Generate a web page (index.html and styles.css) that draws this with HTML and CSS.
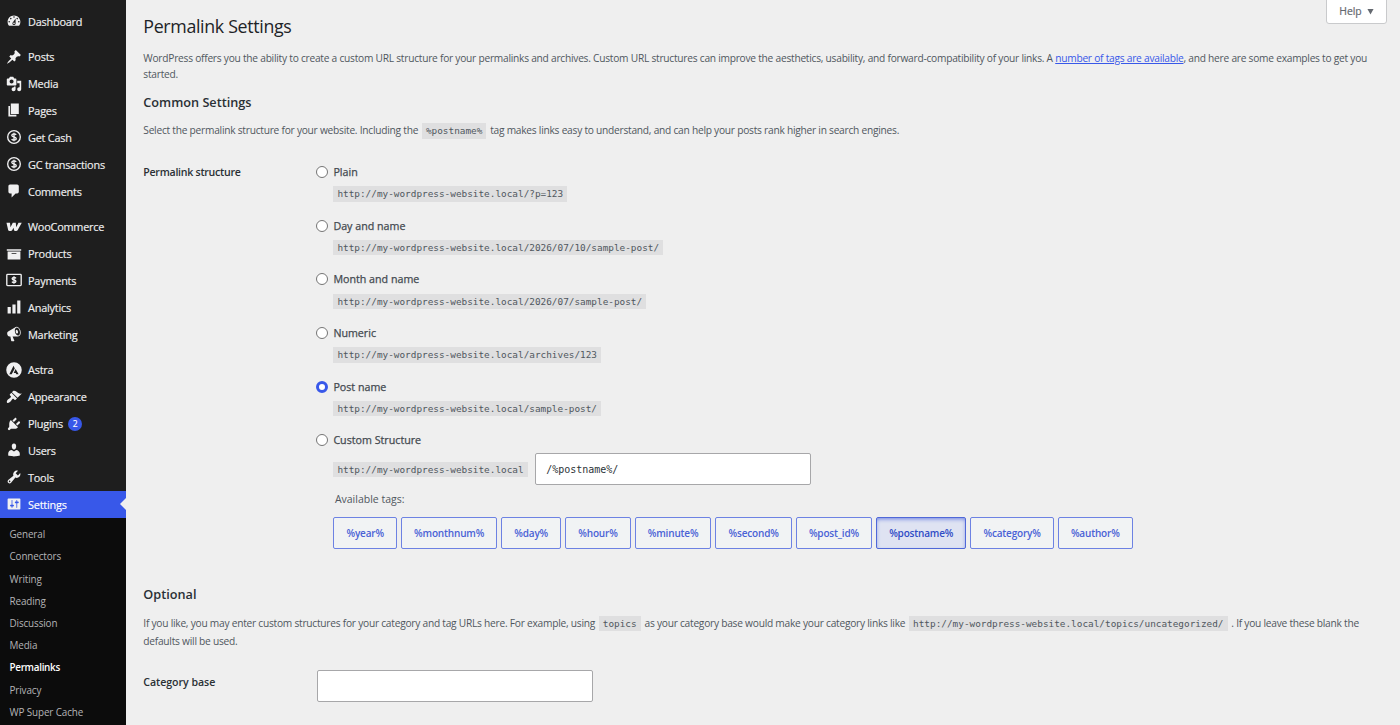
FILE: index.html
```html
<!DOCTYPE html>
<html lang="en">
<head>
<meta charset="utf-8">
<title>Permalink Settings</title>
<link rel="stylesheet" href="styles.css">
</head>
<body>
<div class="admin">
<nav class="sidebar">
  <ul class="menu">
    <li class="item"><svg class="icon" viewBox="0 0 20 20"><path d="M3.76 16h12.48c1.1-1.37 1.76-3.11 1.76-5 0-4.42-3.58-8-8-8s-8 3.58-8 8c0 1.89.66 3.63 1.76 5zM10 4c.55 0 1 .45 1 1s-.45 1-1 1-1-.45-1-1 .45-1 1-1zM6 6c.55 0 1 .45 1 1s-.45 1-1 1-1-.45-1-1 .45-1 1-1zm8 0c.55 0 1 .45 1 1s-.45 1-1 1-1-.45-1-1 .45-1 1-1zm-5.37 5.55L12 7v6c0 1.1-.9 2-2 2s-2-.9-2-2c0-.57.24-1.08.63-1.45zM4 10c.55 0 1 .45 1 1s-.45 1-1 1-1-.45-1-1 .45-1 1-1zm12 0c.55 0 1 .45 1 1s-.45 1-1 1-1-.45-1-1 .45-1 1-1zm-5 3c0-.55-.45-1-1-1s-1 .45-1 1 .45 1 1 1 1-.45 1-1z" fill-rule="evenodd"/></svg><span>Dashboard</span></li>
    <li class="sep"></li>
    <li class="item"><svg class="icon" viewBox="0 0 20 20"><path d="M10.44 3.02l1.82-1.82 6.36 6.35-1.83 1.82c-1.05-.68-2.48-.57-3.41.36l-.75.75c-.92.93-1.04 2.35-.35 3.41l-1.83 1.82-2.41-2.41-2.8 2.79c-.42.42-3.38 2.71-3.8 2.29s1.86-3.39 2.28-3.81l2.79-2.79L4.1 9.36l1.83-1.82c1.05.69 2.48.57 3.4-.36l.75-.75c.93-.92 1.05-2.35.36-3.41z"/></svg><span>Posts</span></li>
    <li class="item"><svg class="icon" viewBox="0 0 20 20"><path d="M13 11V4c0-.55-.45-1-1-1h-1.67L9 1H5L3.67 3H2c-.55 0-1 .45-1 1v7c0 .55.45 1 1 1h10c.55 0 1-.45 1-1zM7 4.5c1.38 0 2.5 1.12 2.5 2.5S8.38 9.5 7 9.5 4.5 8.38 4.5 7 5.62 4.5 7 4.5zM14 6h5v10.5c0 1.38-1.12 2.5-2.5 2.5S14 17.88 14 16.5s1.12-2.5 2.5-2.5c.17 0 .34.02.5.05V9h-3V6zm-4 8.05V13h2v3.5c0 1.38-1.12 2.5-2.5 2.5S7 17.88 7 16.5 8.12 14 9.5 14c.17 0 .34.02.5.05z" fill-rule="evenodd"/></svg><span>Media</span></li>
    <li class="item"><svg class="icon" viewBox="0 0 20 20"><path d="M6 15V2h10v13H6zm-1 1h8v2H3V5h2v11z"/></svg><span>Pages</span></li>
    <li class="item"><svg class="icon line" viewBox="0 0 20 20"><circle cx="10" cy="10" r="7.9"/><path d="M12.7 7.3C12.2 6.5 11.2 6.1 10 6.1c-1.6 0-2.7.7-2.7 1.9 0 2.7 5.5 1.3 5.5 4 0 1.200-1.200 1.900-2.800 1.900-1.400 0-2.500-.5-2.900-1.400M10 4.600v10.800"/></svg><span>Get Cash</span></li>
    <li class="item"><svg class="icon line" viewBox="0 0 20 20"><circle cx="10" cy="10" r="7.9"/><path d="M12.7 7.3C12.2 6.5 11.2 6.1 10 6.1c-1.6 0-2.7.7-2.7 1.9 0 2.7 5.5 1.3 5.5 4 0 1.200-1.200 1.900-2.800 1.900-1.400 0-2.500-.5-2.900-1.400M10 4.600v10.800"/></svg><span>GC transactions</span></li>
    <li class="item"><svg class="icon" viewBox="0 0 20 20"><path d="M5 2h9c1.1 0 2 .9 2 2v7c0 1.1-.9 2-2 2h-2l-5 5v-5H5c-1.1 0-2-.9-2-2V4c0-1.100.9-2 2-2z"/></svg><span>Comments</span></li>
    <li class="sep"></li>
    <li class="item"><svg class="icon" viewBox="0 0 20 20"><path d="M.6 4.700H5L5.600 10.200L8.500 4.700H12.200L12.800 10.200L15.600 4.700H19.700L14.500 14Q13.900 15 12.700 15H11.400Q10.200 15 10 13.800L9.500 10.900L7.700 14Q7.100 15 6 15H4.400Q3 15 2.700 13.700z"/></svg><span>WooCommerce</span></li>
    <li class="item"><svg class="icon" viewBox="0 0 20 20"><path d="M19 4v2H1V4h18zM2 7h16v10H2V7zm11 3V9H7v1h6z" fill-rule="evenodd"/></svg><span>Products</span></li>
    <li class="item"><svg class="icon line" viewBox="0 0 20 20"><rect x="1" y="3" width="18" height="14" rx="1"/><path d="M12.500 7.900C12 7.200 11.100 6.900 10 6.900c-1.400 0-2.300.5-2.300 1.500 0 2.100 4.700 1.100 4.700 3.200 0 1-1 1.500-2.400 1.500-1.200 0-2.100-.4-2.500-1.100M10 5.400v9.200"/></svg><span>Payments</span></li>
    <li class="item"><svg class="icon" viewBox="0 0 20 20"><path d="M18 18V2h-4v16h4zm-6 0V7H8v11h4zm-6 0v-8H2v8h4z"/></svg><span>Analytics</span></li>
    <li class="item"><svg class="icon" viewBox="0 0 20 20"><path fill-rule="evenodd" d="M18.150 5.940c.46 1.620.38 3.220-.02 4.480-.42 1.280-1.260 2.180-2.300 2.480-.16.060-.26.060-.4.060-.06.020-.12.020-.18.020-.06.020-.14.020-.22.020h-6.800l2.220 5.500c.02.140-.06.260-.14.340-.08.100-.24.160-.34.160H6.950c-.1 0-.26-.06-.34-.16-.08-.08-.16-.2-.14-.34l-1-5.500H4.250l-.02-.02c-.5.060-1.080-.18-1.540-.62s-.88-1.080-1.060-1.880c-.24-.8-.2-1.560-.02-2.200.18-.62.58-1.080 1.060-1.300l.02-.02 9-5.400c.1-.06.18-.1.24-.16.060-.04.140-.08.240-.12.160-.08.280-.12.500-.18 1.040-.3 2.240.1 3.220.98s1.840 2.240 2.260 3.860zm-2.580 5.980h-.02c.4-.1.740-.34 1.040-.7.580-.7.860-1.760.860-3.040 0-.64-.1-1.300-.28-1.980-.34-1.360-1.020-2.500-1.780-3.240s-1.680-1.100-2.460-.88c-.82.220-1.400.960-1.700 2-.32 1.040-.28 2.360.060 3.720.38 1.360 1 2.500 1.800 3.240.78.740 1.620 1.100 2.480.88zm-2.540-7.080c.22-.04.42-.02.62.04.38.16.76.48 1.020 1s.42 1.200.42 1.780c0 .3-.04.56-.12.8-.18.48-.44.84-.86.94-.34.1-.8-.06-1.140-.4s-.64-.86-.78-1.500c-.18-.62-.12-1.240.02-1.720s.48-.84.82-.94z"/></svg><span>Marketing</span></li>
    <li class="sep"></li>
    <li class="item"><svg class="icon" viewBox="0 0 20 20"><path fill-rule="evenodd" d="M10 .3a9.700 9.700 0 1 0 0 19.400A9.700 9.700 0 0 0 10 .3zM9.400 4.800L11 8 7.100 15.400H4.200zM12 8.800L15.800 15.400H12.900L12.100 13.600H9.600z"/></svg><span>Astra</span></li>
    <li class="item"><svg class="icon" viewBox="0 0 20 20"><path d="M14.480 11.060L7.410 3.990l1.500-1.500c.5-.56 2.300-.47 3.510.32 1.210.8 1.430 1.280 2.910 2.100 1.180.64 2.450 1.260 4.450.85zm-.71.71L6.700 4.700 4.930 6.470c-.39.39-.39 1.020 0 1.410l1.060 1.060c.39.39.39 1.030 0 1.420-.6.6-1.430 1.110-2.210 1.690-.35.26-.7.53-1.010.84C1.430 14.230.4 16.080 1.400 17.070c.99 1 2.840-.03 4.180-1.360.31-.31.58-.66.85-1.020.57-.78 1.080-1.610 1.690-2.210.39-.39 1.020-.39 1.410 0l1.060 1.060c.39.39 1.020.39 1.410 0z"/></svg><span>Appearance</span></li>
    <li class="item"><svg class="icon" viewBox="0 0 20 20"><path d="M13.110 4.360L9.870 7.600 8 5.730l3.240-3.240c.35-.34 1.050-.2 1.560.32.52.51.66 1.210.31 1.550zm-8 1.770l.91-1.120 9.010 9.010-1.190.84c-.71.71-2.630 1.160-3.820 1.160H6.140L4.900 17.260c-.59.59-1.540.59-2.120 0-.59-.58-.59-1.530 0-2.120l1.240-1.240v-3.880c0-1.130.4-3.190 1.090-3.890zm7.260 3.970l3.240-3.240c.34-.35 1.040-.21 1.550.31.52.51.66 1.210.31 1.550l-3.240 3.250z"/></svg><span>Plugins</span><b class="count">2</b></li>
    <li class="item"><svg class="icon" viewBox="0 0 20 20"><path d="M10 9.250c-2.270 0-2.730-3.440-2.730-3.440C7 4.020 7.820 2 9.970 2c2.160 0 2.980 2.020 2.710 3.810 0 0-.41 3.440-2.680 3.440zm0 2.570L12.720 10c2.390 0 4.520 2.330 4.520 4.530v2.490s-3.650 1.130-7.240 1.130c-3.650 0-7.240-1.130-7.240-1.130v-2.490c0-2.250 1.940-4.480 4.470-4.480z"/></svg><span>Users</span></li>
    <li class="item"><svg class="icon" viewBox="0 0 20 20"><path fill-rule="evenodd" d="M16.680 9.770c-1.340 1.340-3.300 1.670-4.950.99l-5.410 6.520c-.99.99-2.590.99-3.580 0s-.99-2.590 0-3.570l6.520-5.420c-.68-1.650-.35-3.610.99-4.950 1.280-1.280 3.120-1.620 4.720-1.060l-2.890 2.890 2.820 2.820 2.860-2.870c.53 1.580.18 3.390-1.080 4.650zM3.810 16.210c.4.39 1.040.39 1.430 0 .4-.4.4-1.040 0-1.430-.39-.4-1.030-.4-1.430 0-.39.39-.39 1.030 0 1.430z"/></svg><span>Tools</span></li>
    <li class="item current"><svg class="icon" viewBox="0 0 20 20"><path fill-rule="evenodd" d="M18 16V4c0-.55-.45-1-1-1H3c-.55 0-1 .45-1 1v12c0 .55.45 1 1 1h14c.55 0 1-.45 1-1zM8 11h1c.55 0 1 .45 1 1s-.45 1-1 1H8v1.500c0 .28-.22.5-.5.5s-.5-.22-.5-.5V13H6c-.55 0-1-.45-1-1s.45-1 1-1h1V5.500c0-.28.22-.5.5-.5s.5.22.5.5V11zm5-2h-1c-.55 0-1-.45-1-1s.45-1 1-1h1V5.500c0-.28.22-.5.5-.5s.5.22.5.5V7h1c.55 0 1 .45 1 1s-.45 1-1 1h-1v5.500c0 .28-.22.5-.5.5s-.5-.22-.5-.5V9z"/></svg><span>Settings</span></li>
  </ul>
  <ul class="submenu">
    <li>General</li><li>Connectors</li><li>Writing</li><li>Reading</li><li>Discussion</li><li>Media</li><li class="active">Permalinks</li><li>Privacy</li><li>WP Super Cache</li>
  </ul>
</nav>
<main class="content">
  <button class="help"><span>Help</span><svg class="caret" viewBox="0 0 8 8"><path d="M.5 1h7L4 7.500z"/></svg></button>
  <h1>Permalink Settings</h1>
  <p class="text intro">WordPress offers you the ability to create a custom URL structure for your permalinks and archives. Custom URL structures can improve the aesthetics, usability, and forward-compatibility of your links. A <a>number of tags are available</a>, and here are some examples to get you<br>started.</p>
  <h2 class="common">Common Settings</h2>
  <p class="text select">Select the permalink structure for your website. Including the <code>%postname%</code> tag makes links easy to understand, and can help your posts rank higher in search engines.</p>
  <section class="row structure">
    <h3>Permalink structure</h3>
    <div class="options">
      <div class="option"><i class="radio"></i><div><label>Plain</label><code>http://my-wordpress-website.local/?p=123</code></div></div>
      <div class="option"><i class="radio"></i><div><label>Day and name</label><code>http://my-wordpress-website.local/2026/07/10/sample-post/</code></div></div>
      <div class="option"><i class="radio"></i><div><label>Month and name</label><code>http://my-wordpress-website.local/2026/07/sample-post/</code></div></div>
      <div class="option"><i class="radio"></i><div><label>Numeric</label><code>http://my-wordpress-website.local/archives/123</code></div></div>
      <div class="option"><i class="radio checked"></i><div><label>Post name</label><code>http://my-wordpress-website.local/sample-post/</code></div></div>
      <div class="option custom"><i class="radio"></i><div><label>Custom Structure</label>
        <div class="field"><code>http://my-wordpress-website.local</code><div class="input">/%postname%/</div></div>
        <p class="hint">Available tags:</p>
        <div class="tags"><button class="tag">%year%</button><button class="tag">%monthnum%</button><button class="tag">%day%</button><button class="tag">%hour%</button><button class="tag">%minute%</button><button class="tag">%second%</button><button class="tag">%post_id%</button><button class="tag on">%postname%</button><button class="tag">%category%</button><button class="tag">%author%</button></div>
      </div></div>
    </div>
  </section>
  <h2>Optional</h2>
  <p class="text blanks">If you like, you may enter custom structures for your category and tag URLs here. For example, using <code>topics</code> as your category base would make your category links like <code>http://my-wordpress-website.local/topics/uncategorized/</code> . If you leave these blank the<br>defaults will be used.</p>
  <section class="row base"><h3>Category base</h3><div class="input"></div></section>
</main>
</div>
</body>
</html>
```
FILE: styles.css
```css
* { box-sizing: border-box; }
body, h1, h2, h3, p, ul { margin: 0; padding: 0; }
body { background: #efefef; color: #50575e; font-family: "Open Sans", "Noto Sans", sans-serif; font-size: 10.2px; overflow: hidden; }
ul { list-style: none; }
.admin { display: flex; height: 725px; }
.sidebar { width: 126px; flex: none; background: #1e1e1e; padding-top: 7.600px; display: flex; flex-direction: column; }
.item { display: flex; align-items: center; height: 26.900px; padding-left: 6px; color: #f0f0f1; font-size: 10.900px; letter-spacing: -.22px; white-space: nowrap; -webkit-text-stroke: .15px; }
.item span { margin-left: 6px; }
.icon { width: 16px; height: 16px; flex: none; fill: #f0f0f1; }
.icon.line { fill: none; stroke: #f0f0f1; stroke-width: 1.700; }
.sep { height: 8.700px; }
.count { width: 14px; height: 14px; margin-left: 5px; border-radius: 7px; background: #3858e9; color: #fff; font-size: 8.500px; font-weight: 400; line-height: 14px; text-align: center; }
.current { position: relative; background: #3858e9; color: #fff; }
.current::after { content: ""; position: absolute; right: 0; top: 7.500px; border: 6px solid transparent; border-left: 0; border-right-color: #efefef; }
.submenu { flex: 1; background: #0c0c0c; padding-top: 5.600px; color: #b4b4b6; font-size: 9.900px; letter-spacing: -.12px; overflow: hidden; }
.submenu li { height: 22.200px; line-height: 22.200px; padding-left: 9.500px; white-space: nowrap; }
.submenu .active { color: #fff; font-weight: 600; letter-spacing: -.3px; }
.content { position: relative; flex: 1; padding: 16px 0 0 17.300px; }
.help { position: absolute; right: 13px; top: -2px; width: 61px; height: 26px; display: flex; align-items: center; justify-content: center; gap: 5px; padding: 0; background: #fff; border: 1px solid #c9cacc; border-radius: 0 0 3px 3px; color: #646970; font: 10.400px "Open Sans", sans-serif; -webkit-text-stroke: .2px; }
.caret { width: 7px; height: 7px; fill: #646970; }
h1 { height: 20px; line-height: 20px; font-size: 17.800px; font-weight: 400; letter-spacing: -.33px; color: #1d2327; }
.text { white-space: nowrap; letter-spacing: -.245px; }
.intro { margin-top: 13.500px; line-height: 16px; }
a { color: #3858e9; text-decoration: underline; }
h2 { height: 18px; line-height: 18px; color: #2a3035; font-size: 12.700px; font-weight: 600; }
.common { margin-top: 11px; }
.select { margin-top: 11.500px; height: 17px; line-height: 17px; }
code, .input { font-family: "DejaVu Sans Mono", "Liberation Mono", monospace; font-size: 9.400px; letter-spacing: 0; }
code { display: inline-block; height: 15.500px; line-height: 16px; padding: 0 4px; background: #dfdfe0; }
.text code { margin: 0 1.400px; }
.row { display: flex; }
h3 { width: 172.700px; flex: none; color: #2a3035; font-size: 10.600px; font-weight: 600; line-height: 16px; letter-spacing: -.27px; }
.structure { margin-top: 25px; height: 421px; }
.option { display: flex; gap: 5.400px; height: 53.650px; }
.option code { display: block; width: max-content; margin-top: 6.300px; }
label { display: block; height: 16px; line-height: 16px; color: #43494f; font-size: 10.700px; -webkit-text-stroke: .25px; }
.radio { width: 12px; height: 12px; margin-top: 2px; border: 1px solid #757575; border-radius: 50%; background: #fff; }
.radio.checked { border: 3.500px solid #3858e9; }
.custom .field { display: flex; align-items: center; gap: 7.500px; margin-top: 5px; }
.custom code { margin: 1px 0 0; }
.input { width: 276px; height: 32px; line-height: 31px; padding: 0 10px; background: #fff; border: 1px solid #a7a7a9; border-radius: 2px; color: #2c3338; font-size: 10px; }
.hint { margin: 5px 0 0 1.500px; line-height: 18px; font-size: 10.500px; }
.tags { display: flex; gap: 4px; margin-top: 9px; }
.tag { height: 32px; padding: 0 12.100px 1px; background: #f1f3f4; border: 1px solid #6d82e3; border-radius: 2px; color: #4a62d6; font: 600 10px "Open Sans", sans-serif; letter-spacing: -.18px; white-space: nowrap; }
.tag.on { background: #dfe3f2; border-color: #5068d8; color: #2f4cc6; box-shadow: inset 0 2px 4px -1px #6d82e3; }
.blanks { margin-top: 10.500px; line-height: 18px; }
.base { margin-top: 20px; }
.base h3 { margin-top: 4.500px; width: 173.700px; letter-spacing: -.04px; }
```
